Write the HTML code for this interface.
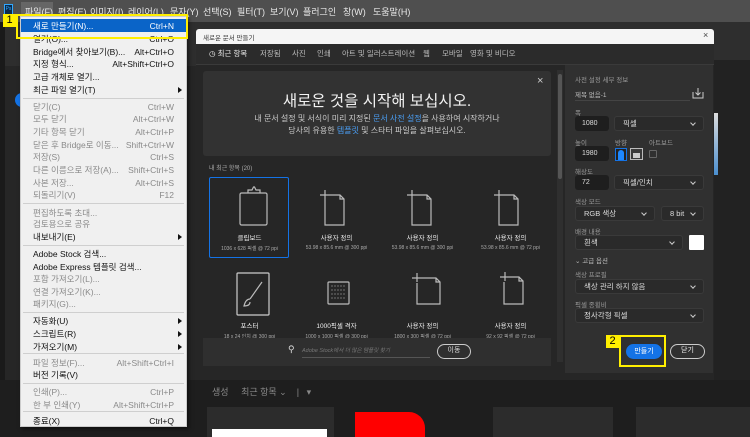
<!DOCTYPE html>
<html><head><meta charset="utf-8"><style>
*{margin:0;padding:0;box-sizing:border-box}
body{width:750px;height:437px;overflow:hidden;background:#262626;font-family:"Liberation Sans","Noto Sans CJK KR",sans-serif;position:relative}
.a{position:absolute;white-space:nowrap}
.mb{left:0;top:0;width:750px;height:22px;background:#4f4f4f}
.mb span{position:absolute;top:5px;font-size:9px;color:#e8e8e8}
.menu{left:20px;top:16px;width:167px;height:411px;background:#f0f0f0;border:1px solid #ccc;box-shadow:2px 2px 4px rgba(0,0,0,.5)}
.mi{position:absolute;left:12px;font-size:8.5px;color:#111;height:12px;line-height:12px}
.mi.d{color:#8a8a8a}
.sc{position:absolute;right:12px;font-size:8.5px;color:#111;height:12px;line-height:12px}
.sc.d{color:#8a8a8a}
.sep{position:absolute;left:2px;width:161px;height:1px;background:#cfcfcf}
.arr{position:absolute;left:157px;width:0;height:0;border-left:4px solid #111;border-top:3.5px solid transparent;border-bottom:3.5px solid transparent}
.lab{font-size:6.5px;color:#999}
.inp{background:#1e1e1e;border-radius:3px;font-size:7px;color:#ddd;padding-left:7px;line-height:15px;height:15px}
.sel{background:#2a2a2a;border:1px solid #3a3a3a;border-radius:3px;font-size:7.5px;color:#ddd;padding-left:8px;line-height:13px;height:15px}
.sel:after{content:"";position:absolute;right:8px;top:4px;width:3px;height:3px;border-right:1px solid #ccc;border-bottom:1px solid #ccc;transform:rotate(45deg)}
.card{font-size:6px;color:#ddd;text-align:center;width:85px}
.card b{display:block;font-size:6.5px;font-weight:normal;color:#eee;margin-bottom:3px}
.card i{font-style:normal;font-size:5px;color:#aaa}
</style></head><body>
<div class="a mb">
<div class="a" style="left:4px;top:4px;width:9px;height:11px;background:#0b2a4a;border:1px solid #31a8ff;font-size:5px;color:#31a8ff;line-height:9px;text-align:center">Ps</div>
<div class="a" style="left:21px;top:2px;width:32px;height:18px;background:#666"></div>
<span style="left:25px">파일(F)</span><span style="left:58px">편집(E)</span><span style="left:90px">이미지(I)</span><span style="left:128px">레이어(L)</span><span style="left:170px">문자(Y)</span><span style="left:203px">선택(S)</span><span style="left:237px">필터(T)</span><span style="left:270px">보기(V)</span><span style="left:303px">플러그인</span><span style="left:343px">창(W)</span><span style="left:373px">도움말(H)</span>
</div>
<div class="a" style="left:0;top:22px;width:750px;height:44px;background:#2e2e2e"></div>
<div class="a" style="left:0;top:22px;width:5px;height:415px;background:#1a1a1a"></div>
<div class="a" style="left:15px;top:93px;width:14px;height:14px;border-radius:7px;background:#1473e6"></div>
<div class="a" style="left:0;top:380px;width:750px;height:57px;background:#1e1e1e"></div>
<div class="a" style="left:207px;top:407px;width:127px;height:30px;background:#2c2c2c"></div>
<div class="a" style="left:212px;top:429px;width:115px;height:8px;background:#fff"></div>
<div class="a" style="left:355px;top:412px;width:70px;height:25px;background:#f00;border-radius:0 16px 0 0"></div>
<div class="a" style="left:493px;top:407px;width:120px;height:30px;background:#2c2c2c"></div>
<div class="a" style="left:636px;top:407px;width:114px;height:30px;background:#2c2c2c"></div>
<div class="a" style="left:714px;top:60px;width:36px;height:320px;background:#222"></div>
<div class="a" style="left:713px;top:113px;width:5px;height:62px;background:linear-gradient(#ddd,#4a8fd0)"></div>
<div class="a" style="left:212px;top:385px;font-size:9px;color:#888">생성 &nbsp;&nbsp;&nbsp; 최근 항목 ⌄ &nbsp;&nbsp; | &nbsp; ▾</div>

<div class="a" style="left:196px;top:29px;width:518px;height:15px;background:#f5f5f5;border-radius:3px 3px 0 0"></div>
<div class="a" style="left:203px;top:32px;font-size:6.5px;color:#333">새로운 문서 만들기</div>
<div class="a" style="left:703px;top:30px;font-size:9px;color:#444">×</div>
<div class="a" style="left:196px;top:44px;width:518px;height:329px;background:#262626"></div>
<div class="a" style="left:196px;top:44px;width:518px;height:21px;background:#2b2b2b;border-bottom:1px solid #3a3a3a"></div>
<div class="a" style="left:196px;top:48px;font-size:7.5px;color:#bbb">
<span class="a" style="left:13px;top:0;color:#eee">◷ 최근 항목</span><span class="a" style="left:64px">저장됨</span><span class="a" style="left:96px">사진</span><span class="a" style="left:121px">인쇄</span><span class="a" style="left:146px">아트 및 일러스트레이션</span><span class="a" style="left:227px">웹</span><span class="a" style="left:246px">모바일</span><span class="a" style="left:274px">영화 및 비디오</span></div>
<div class="a" style="left:203px;top:71px;width:348px;height:85px;background:#323232;border-radius:3px"></div>
<div class="a" style="left:537px;top:75px;font-size:11px;color:#ccc">×</div>
<div class="a" style="left:203px;top:89px;width:348px;text-align:center;font-size:15.5px;color:#f2f2f2">새로운 것을 시작해 보십시오.</div>
<div class="a" style="left:203px;top:113px;width:348px;text-align:center;font-size:8px;color:#ccc;line-height:12px">내 문서 설정 및 서식이 미리 지정된 <span style="color:#4a9ff5">문서 사전 설정</span>을 사용하여 시작하거나<br>당사의 유용한 <span style="color:#4a9ff5">템플릿</span> 및 스타터 파일을 살펴보십시오.</div>
<div class="a" style="left:209px;top:163px;font-size:6px;color:#aaa">내 최근 항목 (20)</div>
<div class="a" style="left:209px;top:177px;width:80px;height:81px;border:1.5px solid #1473e6;border-radius:2px"></div>
<svg class="a" style="left:200px;top:180px" width="360" height="145" fill="none" stroke="#bbb" stroke-width="1.2">
<rect x="40" y="13" width="27" height="32" rx="1.5"/><path d="M48 13v-3h4l1.5-3h1l1.5 3h4v3"/>
<path d="M125 10v10M120 15h10M130 15h10l4 4v26h-19v-25M140 15v4h4"/>
<g transform="translate(87 0)"><path d="M125 10v10M120 15h10M130 15h10l4 4v26h-19v-25M140 15v4h4"/></g>
<g transform="translate(174 0)"><path d="M125 10v10M120 15h10M130 15h10l4 4v26h-19v-25M140 15v4h4"/></g>
<rect x="37" y="93" width="32" height="42" rx="1" stroke="#ccc"/><path d="M62 102l-12 17M50 119c-3 0-5 3-6 7 3 0 6-1 6-4" />
<rect x="128" y="102" width="21" height="22" rx="1"/>
<g fill="#aaa" stroke="none"><circle cx="132" cy="106" r=".6"/><circle cx="135" cy="106" r=".6"/><circle cx="138" cy="106" r=".6"/><circle cx="141" cy="106" r=".6"/><circle cx="144" cy="106" r=".6"/><circle cx="132" cy="110" r=".6"/><circle cx="135" cy="110" r=".6"/><circle cx="138" cy="110" r=".6"/><circle cx="141" cy="110" r=".6"/><circle cx="144" cy="110" r=".6"/><circle cx="132" cy="114" r=".6"/><circle cx="135" cy="114" r=".6"/><circle cx="138" cy="114" r=".6"/><circle cx="141" cy="114" r=".6"/><circle cx="144" cy="114" r=".6"/><circle cx="132" cy="118" r=".6"/><circle cx="135" cy="118" r=".6"/><circle cx="138" cy="118" r=".6"/><circle cx="141" cy="118" r=".6"/><circle cx="144" cy="118" r=".6"/></g>
<path d="M217 93v9M212 98h9M221 98h15l4 4v22h-23v-21M236 98v4h4"/>
<path d="M305 92v9M300 97h9M309 97h10l4 4v23h-19v-22M319 97v4h4"/>
</svg>
<div class="a card" style="left:207px;top:232px"><b>클립보드</b><i>1036 x 628 픽셀 @ 72 ppi</i></div>
<div class="a card" style="left:294px;top:232px"><b>사용자 정의</b><i>53.98 x 85.6 mm @ 300 ppi</i></div>
<div class="a card" style="left:380px;top:232px"><b>사용자 정의</b><i>53.98 x 85.6 mm @ 300 ppi</i></div>
<div class="a card" style="left:468px;top:232px"><b>사용자 정의</b><i>53.98 x 85.6 mm @ 72 ppi</i></div>
<div class="a card" style="left:207px;top:320px"><b>포스터</b><i>18 x 24 인치 @ 300 ppi</i></div>
<div class="a card" style="left:294px;top:320px"><b>1000픽셀 격자</b><i>1000 x 1000 픽셀 @ 300 ppi</i></div>
<div class="a card" style="left:380px;top:320px"><b>사용자 정의</b><i>1800 x 300 픽셀 @ 72 ppi</i></div>
<div class="a card" style="left:468px;top:320px"><b>사용자 정의</b><i>92 x 92 픽셀 @ 72 ppi</i></div>
<div class="a" style="left:557px;top:70px;width:6px;height:292px;background:#2f2f2f"></div>
<div class="a" style="left:558px;top:74px;width:4px;height:105px;background:#555;border-radius:2px"></div>
<div class="a" style="left:203px;top:338px;width:348px;height:28px;background:#2f2f2f"></div>
<div class="a" style="left:288px;top:344px;font-size:9px;color:#ddd">⚲</div>
<div class="a" style="left:302px;top:346px;width:128px;border-bottom:1px solid #555;font-size:5.5px;color:#777;font-style:italic;padding-bottom:3px">Adobe Stock에서 더 많은 템플릿 찾기</div>
<div class="a" style="left:437px;top:344px;width:34px;height:15px;border:1.3px solid #ccc;border-radius:8px;font-size:7px;color:#ddd;text-align:center;line-height:12px">이동</div>

<div class="a" style="left:565px;top:65px;width:148px;height:308px;background:#303030"></div>
<div class="a lab" style="left:575px;top:74px">사전 설정 세부 정보</div>
<div class="a" style="left:575px;top:89px;font-size:6.5px;color:#bbb">제목 없음-1</div>
<div class="a" style="left:575px;top:100px;width:115px;height:1px;background:#444"></div>
<svg class="a" style="left:692px;top:87px" width="12" height="12" fill="none" stroke="#ccc" stroke-width="1"><path d="M1 5v6h10V5M6 1v7M3.5 5.5L6 8l2.5-2.5"/></svg>
<div class="a lab" style="left:575px;top:107px">폭</div>
<div class="a inp" style="left:575px;top:116px;width:34px">1080</div>
<div class="a sel" style="left:614px;top:116px;width:90px">픽셀</div>
<div class="a lab" style="left:575px;top:137px">높이</div><div class="a lab" style="left:615px;top:137px">방향</div><div class="a lab" style="left:649px;top:137px">아트보드</div>
<div class="a inp" style="left:575px;top:146px;width:34px">1980</div>
<div class="a" style="left:615px;top:148px;width:12px;height:13px;border:1px solid #1473e6;background:#222"></div>
<div class="a" style="left:618px;top:150px;width:6px;height:10px;background:#1e88ff;border-radius:3px 3px 0 0"></div>
<div class="a" style="left:630px;top:148px;width:13px;height:12px;border:1px solid #bbb;background:#3a3a3a"></div>
<div class="a" style="left:633px;top:153px;width:7px;height:5px;background:#ccc"></div>
<div class="a" style="left:649px;top:150px;width:8px;height:8px;border:1px solid #666;border-radius:1px"></div>
<div class="a lab" style="left:575px;top:166px">해상도</div>
<div class="a inp" style="left:575px;top:175px;width:34px">72</div>
<div class="a sel" style="left:614px;top:175px;width:90px">픽셀/인치</div>
<div class="a lab" style="left:575px;top:196px">색상 모드</div>
<div class="a sel" style="left:575px;top:206px;width:80px">RGB 색상</div>
<div class="a sel" style="left:661px;top:206px;width:43px">8 bit</div>
<div class="a lab" style="left:575px;top:226px">배경 내용</div>
<div class="a sel" style="left:575px;top:235px;width:108px">흰색</div>
<div class="a" style="left:689px;top:235px;width:15px;height:15px;background:#fff;border-radius:1px"></div>
<div class="a" style="left:575px;top:255px;font-size:6.5px;color:#bbb">⌄ 고급 옵션</div>
<div class="a lab" style="left:575px;top:269px">색상 프로필</div>
<div class="a sel" style="left:575px;top:279px;width:129px">색상 관리 하지 않음</div>
<div class="a lab" style="left:575px;top:299px">픽셀 종횡비</div>
<div class="a sel" style="left:575px;top:308px;width:129px">정사각형 픽셀</div>
<div class="a" style="left:619px;top:335px;width:47px;height:32px;border:2.5px solid #ffef00"></div>
<div class="a" style="left:606px;top:335px;width:13px;height:13px;background:#ffef00;font-size:11px;color:#000;line-height:13px;text-align:center">2</div>
<div class="a" style="left:626px;top:344px;width:36px;height:15px;background:#1473e6;border-radius:8px;font-size:7px;color:#fff;text-align:center;line-height:15px">만들기</div>
<div class="a" style="left:670px;top:344px;width:35px;height:15px;border:1.2px solid #ccc;border-radius:8px;font-size:7px;color:#eee;text-align:center;line-height:12px">닫기</div>

<div class="a menu">
<div class="a" style="left:0;top:2px;width:165px;height:13px;background:#0a64c8"></div>
<div class="mi" style="top:3px;color:#fff">새로 만들기(N)...</div><div class="sc" style="top:3px;color:#fff">Ctrl+N</div>
<div class="mi" style="top:16px">열기(O)...</div><div class="sc" style="top:16px">Ctrl+O</div>
<div class="mi" style="top:29px">Bridge에서 찾아보기(B)...</div><div class="sc" style="top:29px">Alt+Ctrl+O</div>
<div class="mi" style="top:41px">지정 형식...</div><div class="sc" style="top:41px">Alt+Shift+Ctrl+O</div>
<div class="mi" style="top:54px">고급 개체로 열기...</div>
<div class="mi" style="top:67px">최근 파일 열기(T)</div><div class="arr" style="top:70px"></div>
<div class="sep" style="top:81px"></div>
<div class="mi d" style="top:84px">닫기(C)</div><div class="sc d" style="top:84px">Ctrl+W</div>
<div class="mi d" style="top:96px">모두 닫기</div><div class="sc d" style="top:96px">Alt+Ctrl+W</div>
<div class="mi d" style="top:109px">기타 항목 닫기</div><div class="sc d" style="top:109px">Alt+Ctrl+P</div>
<div class="mi d" style="top:122px">닫은 후 Bridge로 이동...</div><div class="sc d" style="top:122px">Shift+Ctrl+W</div>
<div class="mi d" style="top:134px">저장(S)</div><div class="sc d" style="top:134px">Ctrl+S</div>
<div class="mi d" style="top:147px">다른 이름으로 저장(A)...</div><div class="sc d" style="top:147px">Shift+Ctrl+S</div>
<div class="mi d" style="top:160px">사본 저장...</div><div class="sc d" style="top:160px">Alt+Ctrl+S</div>
<div class="mi d" style="top:172px">되돌리기(V)</div><div class="sc d" style="top:172px">F12</div>
<div class="sep" style="top:186px"></div>
<div class="mi d" style="top:190px">편집하도록 초대...</div>
<div class="mi d" style="top:201px">검토용으로 공유</div>
<div class="mi" style="top:214px">내보내기(E)</div><div class="arr" style="top:217px"></div>
<div class="sep" style="top:228px"></div>
<div class="mi" style="top:231px">Adobe Stock 검색...</div>
<div class="mi" style="top:244px">Adobe Express 템플릿 검색...</div>
<div class="mi d" style="top:256px">포함 가져오기(L)...</div>
<div class="mi d" style="top:269px">연결 가져오기(K)...</div>
<div class="mi d" style="top:281px">패키지(G)...</div>
<div class="sep" style="top:295px"></div>
<div class="mi" style="top:298px">자동화(U)</div><div class="arr" style="top:301px"></div>
<div class="mi" style="top:311px">스크립트(R)</div><div class="arr" style="top:314px"></div>
<div class="mi" style="top:324px">가져오기(M)</div><div class="arr" style="top:327px"></div>
<div class="sep" style="top:336px"></div>
<div class="mi d" style="top:340px">파일 정보(F)...</div><div class="sc d" style="top:340px">Alt+Shift+Ctrl+I</div>
<div class="mi" style="top:352px">버전 기록(V)</div>
<div class="sep" style="top:366px"></div>
<div class="mi d" style="top:369px">인쇄(P)...</div><div class="sc d" style="top:369px">Ctrl+P</div>
<div class="mi d" style="top:382px">한 부 인쇄(Y)</div><div class="sc d" style="top:382px">Alt+Shift+Ctrl+P</div>
<div class="sep" style="top:394px"></div>
<div class="mi" style="top:398px">종료(X)</div><div class="sc" style="top:398px">Ctrl+Q</div>
</div>
<div class="a" style="left:16px;top:14px;width:172px;height:25px;border:2.5px solid #ffef00"></div>
<div class="a" style="left:3px;top:14px;width:13px;height:13px;background:#ffef00;font-size:11px;color:#000;line-height:13px;text-align:center">1</div>
</body></html>
